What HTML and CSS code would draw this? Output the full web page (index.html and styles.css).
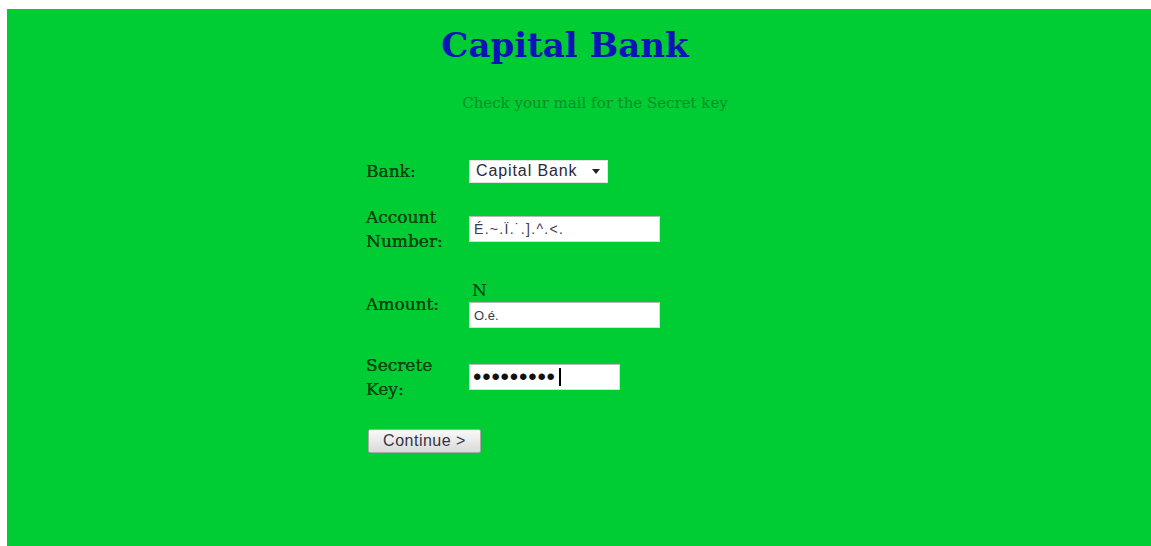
FILE: index.html
```html
<!DOCTYPE html>
<html lang="en">
<head>
<meta charset="utf-8">
<title>Capital Bank</title>
<link rel="stylesheet" href="styles.css">
</head>
<body>
<div class="page">
  <div class="column">
    <h1 class="title">Capital Bank</h1>
    <p class="notice">Check your mail for the Secret key</p>

    <form class="transfer">
      <div class="row row-bank">
        <span class="label">Bank:</span>
        <div class="field">
          <div class="select">
            <span>Capital Bank</span>
            <svg class="arrow" width="8" height="5" viewBox="0 0 8 5"><path d="M0 0h8L4 5z" fill="#222"/></svg>
          </div>
        </div>
      </div>

      <div class="row row-account">
        <span class="label">Account<br>Number:</span>
        <div class="field">
          <input class="text wide spaced" type="text" value="É.~.Ï.˙.].^.&lt;.">
        </div>
      </div>

      <div class="row row-amount">
        <span class="label">Amount:</span>
        <div class="field stacked">
          <span class="currency">N</span>
          <input class="text wide" type="text" value="O.é.">
        </div>
      </div>

      <div class="row row-key">
        <span class="label">Secrete<br>Key:</span>
        <div class="field">
          <div class="secret">
            <input class="text narrow" type="password" value="123456789">
            <span class="caret"></span>
          </div>
        </div>
      </div>

      <div class="actions">
        <button class="continue" type="button">Continue &gt;</button>
      </div>
    </form>
  </div>
</div>
</body>
</html>
```

FILE: styles.css
```css
html, body {
  height: 100%;
}

body {
  margin: 9px 0 0 7px;
  background: #ffffff;
  font-family: "DejaVu Serif", "Liberation Serif", serif;
}

.page {
  background: #00cc33;
  min-height: 537px;
  display: flex;
  justify-content: center;
}

.column {
  width: 426px;
  display: flex;
  flex-direction: column;
}

.title {
  margin: 16px 0 0;
  padding-right: 28px;
  text-align: center;
  font-family: "DejaVu Serif", serif;
  font-weight: bold;
  font-size: 34px;
  line-height: 40px;
  color: #0a14b8;
}

.notice {
  margin: 29px 0 0;
  padding-left: 32px;
  text-align: center;
  font-size: 15px;
  line-height: 18px;
  color: #0b8f28;
}

.transfer {
  display: flex;
  flex-direction: column;
  margin-top: 47px;
}

.row {
  display: flex;
  align-items: center;
}

.label {
  width: 103px;
  flex: none;
  font-size: 17px;
  line-height: 24px;
  color: #02420c;
  text-shadow: 0 0 0.6px #02420c;
}

.field {
  display: flex;
  align-items: center;
}

.field.stacked {
  flex-direction: column;
  align-items: flex-start;
}

.row-account { margin-top: 22px; }
.row-amount { margin-top: 26px; }
.row-key { margin-top: 25px; }

.currency {
  font-size: 17px;
  line-height: 23px;
  color: #023c0c;
  padding-left: 3px;
}

.select {
  width: 139px;
  height: 23px;
  box-sizing: border-box;
  background: #ffffff;
  border: 1px solid #e4e4e4;
  display: flex;
  align-items: center;
  justify-content: space-between;
  padding: 0 7px 0 6px;
  font-family: "Liberation Sans", Arial, sans-serif;
  font-size: 16px;
  letter-spacing: 0.9px;
  color: #2a2a3a;
}

.arrow {
  display: block;
}

.text {
  height: 26px;
  box-sizing: border-box;
  margin: 0;
  border: 1px solid #dcdcdc;
  border-top-color: #b8b8b8;
  background: #ffffff;
  padding: 0 4px;
  font-family: "Liberation Sans", Arial, sans-serif;
  font-size: 13px;
  color: #3a3a4a;
  outline: none;
}

.text.spaced {
  font-size: 14px;
  letter-spacing: 1.3px;
}

.wide { width: 191px; }
.narrow { width: 151px; }

.secret {
  position: relative;
}

.text[type="password"] {
  font-size: 24px;
  line-height: 24px;
  color: #111111;
  letter-spacing: 0.8px;
  padding-left: 3px;
}

.caret {
  position: absolute;
  left: 90px;
  top: 4px;
  width: 2px;
  height: 18px;
  background: #000000;
}

.actions {
  margin-top: 28px;
  padding-left: 2px;
}

.continue {
  width: 113px;
  height: 24px;
  margin: 0;
  border: 1px solid #a8a8a8;
  border-radius: 2px;
  background: linear-gradient(#f9f9f9, #dadada);
  font-family: "Liberation Sans", Arial, sans-serif;
  font-size: 16px;
  letter-spacing: 0.5px;
  color: #333344;
  padding: 0;
}
```
